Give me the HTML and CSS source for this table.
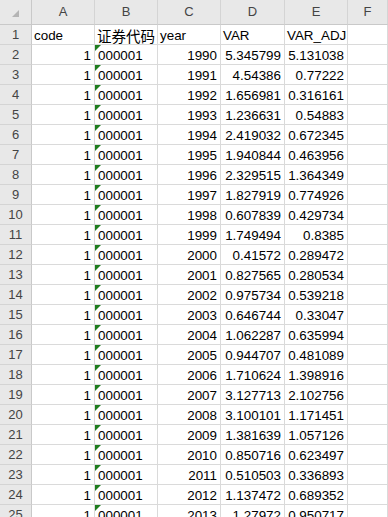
FILE: index.html
```html
<!DOCTYPE html>
<html>
<head>
<meta charset="utf-8">
<link rel="stylesheet" href="styles.css">
</head>
<body>
<div class="sheet">
  <div class="ch corner"><span class="tri"></span></div>
  <div class="ch">A</div><div class="ch">B</div><div class="ch">C</div><div class="ch">D</div><div class="ch">E</div><div class="ch">F</div>

  <div class="rh">1</div><div class="c s">code</div><div class="c s cjk">证券代码</div><div class="c s">year</div><div class="c s">VAR</div><div class="c s">VAR_ADJ</div><div class="c"></div>
  <div class="rh">2</div><div class="c n">1</div><div class="c s t">000001</div><div class="c n">1990</div><div class="c n">5.345799</div><div class="c n">5.131038</div><div class="c"></div>
  <div class="rh">3</div><div class="c n">1</div><div class="c s t">000001</div><div class="c n">1991</div><div class="c n">4.54386</div><div class="c n">0.77222</div><div class="c"></div>
  <div class="rh">4</div><div class="c n">1</div><div class="c s t">000001</div><div class="c n">1992</div><div class="c n">1.656981</div><div class="c n">0.316161</div><div class="c"></div>
  <div class="rh">5</div><div class="c n">1</div><div class="c s t">000001</div><div class="c n">1993</div><div class="c n">1.236631</div><div class="c n">0.54883</div><div class="c"></div>
  <div class="rh">6</div><div class="c n">1</div><div class="c s t">000001</div><div class="c n">1994</div><div class="c n">2.419032</div><div class="c n">0.672345</div><div class="c"></div>
  <div class="rh">7</div><div class="c n">1</div><div class="c s t">000001</div><div class="c n">1995</div><div class="c n">1.940844</div><div class="c n">0.463956</div><div class="c"></div>
  <div class="rh">8</div><div class="c n">1</div><div class="c s t">000001</div><div class="c n">1996</div><div class="c n">2.329515</div><div class="c n">1.364349</div><div class="c"></div>
  <div class="rh">9</div><div class="c n">1</div><div class="c s t">000001</div><div class="c n">1997</div><div class="c n">1.827919</div><div class="c n">0.774926</div><div class="c"></div>
  <div class="rh">10</div><div class="c n">1</div><div class="c s t">000001</div><div class="c n">1998</div><div class="c n">0.607839</div><div class="c n">0.429734</div><div class="c"></div>
  <div class="rh">11</div><div class="c n">1</div><div class="c s t">000001</div><div class="c n">1999</div><div class="c n">1.749494</div><div class="c n">0.8385</div><div class="c"></div>
  <div class="rh">12</div><div class="c n">1</div><div class="c s t">000001</div><div class="c n">2000</div><div class="c n">0.41572</div><div class="c n">0.289472</div><div class="c"></div>
  <div class="rh">13</div><div class="c n">1</div><div class="c s t">000001</div><div class="c n">2001</div><div class="c n">0.827565</div><div class="c n">0.280534</div><div class="c"></div>
  <div class="rh">14</div><div class="c n">1</div><div class="c s t">000001</div><div class="c n">2002</div><div class="c n">0.975734</div><div class="c n">0.539218</div><div class="c"></div>
  <div class="rh">15</div><div class="c n">1</div><div class="c s t">000001</div><div class="c n">2003</div><div class="c n">0.646744</div><div class="c n">0.33047</div><div class="c"></div>
  <div class="rh">16</div><div class="c n">1</div><div class="c s t">000001</div><div class="c n">2004</div><div class="c n">1.062287</div><div class="c n">0.635994</div><div class="c"></div>
  <div class="rh">17</div><div class="c n">1</div><div class="c s t">000001</div><div class="c n">2005</div><div class="c n">0.944707</div><div class="c n">0.481089</div><div class="c"></div>
  <div class="rh">18</div><div class="c n">1</div><div class="c s t">000001</div><div class="c n">2006</div><div class="c n">1.710624</div><div class="c n">1.398916</div><div class="c"></div>
  <div class="rh">19</div><div class="c n">1</div><div class="c s t">000001</div><div class="c n">2007</div><div class="c n">3.127713</div><div class="c n">2.102756</div><div class="c"></div>
  <div class="rh">20</div><div class="c n">1</div><div class="c s t">000001</div><div class="c n">2008</div><div class="c n">3.100101</div><div class="c n">1.171451</div><div class="c"></div>
  <div class="rh">21</div><div class="c n">1</div><div class="c s t">000001</div><div class="c n">2009</div><div class="c n">1.381639</div><div class="c n">1.057126</div><div class="c"></div>
  <div class="rh">22</div><div class="c n">1</div><div class="c s t">000001</div><div class="c n">2010</div><div class="c n">0.850716</div><div class="c n">0.623497</div><div class="c"></div>
  <div class="rh">23</div><div class="c n">1</div><div class="c s t">000001</div><div class="c n">2011</div><div class="c n">0.510503</div><div class="c n">0.336893</div><div class="c"></div>
  <div class="rh">24</div><div class="c n">1</div><div class="c s t">000001</div><div class="c n">2012</div><div class="c n">1.137472</div><div class="c n">0.689352</div><div class="c"></div>
  <div class="rh">25</div><div class="c n">1</div><div class="c s t">000001</div><div class="c n">2013</div><div class="c n">1.27972</div><div class="c n">0.950717</div><div class="c"></div>
</div>
</body>
</html>
```

FILE: styles.css
```css
html, body {
  margin: 0;
  padding: 0;
  background: #ffffff;
  overflow: hidden;
  height: 517px;
}

.sheet {
  display: grid;
  grid-template-columns: 32px 63px 63px 63px 64px 63px 1fr;
  grid-template-rows: 25px;
  grid-auto-rows: 20px;
  font-family: "Liberation Sans", Arial, sans-serif;
  font-size: 13.4px;
  color: #000;
}

.sheet > div {
  box-sizing: border-box;
  border-right: 1px solid #dadada;
  border-bottom: 1px solid #dadada;
  white-space: nowrap;
  overflow: visible;
}

.ch {
  background: #e8e8e8;
  color: #444;
  font-size: 13px;
  text-align: center;
  line-height: 24px;
  border-bottom-color: #c9c9c9 !important;
  border-right-color: #d4d4d4 !important;
}

.corner {
  display: flex;
  justify-content: flex-end;
  align-items: flex-end;
  padding: 0 12px 7px 0;
  border-right-color: #c9c9c9 !important;
}

.tri {
  display: block;
  width: 7px;
  height: 7px;
  background: #b4b4b4;
  clip-path: polygon(100% 0, 100% 100%, 0 100%);
}

.rh {
  background: #e8e8e8;
  color: #444;
  font-size: 13px;
  text-align: center;
  line-height: 20px;
  border-right-color: #c9c9c9 !important;
  border-bottom-color: #d4d4d4 !important;
}

.c {
  line-height: 19px;
  padding-top: 1px;
}

.n {
  text-align: right;
  padding-right: 3px;
}

.s {
  text-align: left;
  padding-left: 2px;
}

.cjk {
  font-family: "Noto Sans CJK SC", "Liberation Sans", sans-serif;
  font-size: 14.5px;
  line-height: 19px;
}

.t {
  position: relative;
  padding-left: 3px;
}

.t::before {
  content: "";
  position: absolute;
  left: 0;
  top: 0;
  width: 6px;
  height: 6px;
  background: #1f7d1f;
  clip-path: polygon(0 0, 100% 0, 0 100%);
}
```
